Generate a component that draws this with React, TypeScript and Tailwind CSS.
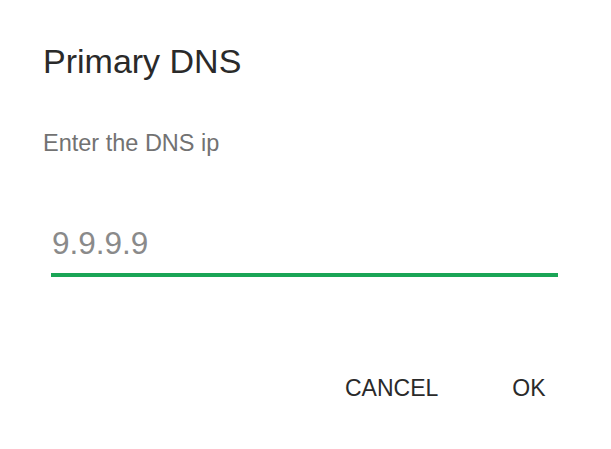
export default function App() {
  return (
    <div
      className="w-[611px] h-[449px] bg-white flex flex-col"
      style={{ fontFamily: "'Liberation Sans', Arial, sans-serif" }}
    >
      <div className="pl-[43px] pt-[41px] text-[34px] leading-[40px] text-[#2a2a2a]">Primary DNS</div>
      <div className="pl-[43px] mt-[48px] text-[23.5px] leading-[28px] text-[#727272]">Enter the DNS ip</div>
      <div className="ml-[51px] mr-[53px] mt-[68px]">
        <div className="text-[31.5px] leading-[36px] text-[#8a8a8a] pl-[1px]">9.9.9.9</div>
        <div className="mt-[12px] h-[4px] bg-[#1aa556]"></div>
      </div>
      <div className="flex pl-[345px] mt-[97px] gap-[74px] text-[23px] leading-[28px] text-[#2a2a2a]">
        <span>CANCEL</span>
        <span>OK</span>
      </div>
    </div>
  );
}
